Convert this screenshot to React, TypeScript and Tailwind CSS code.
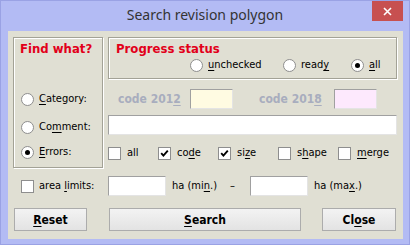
import React from "react";

const ui = "font-['DejaVu_Sans_Condensed','Liberation_Sans',sans-serif]";

function U({ children }: { children: React.ReactNode }) {
  return <span className="underline decoration-1 underline-offset-[2px]">{children}</span>;
}

function Radio({ checked }: { checked?: boolean }) {
  return (
    <span className="flex h-[13px] w-[13px] shrink-0 items-center justify-center rounded-full border border-[#8e8e8e] bg-white">
      {checked && <span className="h-[5px] w-[5px] rounded-full bg-black" />}
    </span>
  );
}

function Check({ checked }: { checked?: boolean }) {
  return (
    <span className="flex h-[13px] w-[13px] shrink-0 items-center justify-center border border-[#8e8e8e] bg-white">
      {checked && (
        <svg width="9" height="9" viewBox="0 0 9 9">
          <path d="M1.2 4.2 L3.4 6.6 L7.8 1.6" stroke="#000" strokeWidth="1.9" fill="none" />
        </svg>
      )}
    </span>
  );
}

const group = "border border-[#a3a296] shadow-[inset_1px_1px_0_#ffffff,1px_1px_0_#ffffff]";
const input = "h-[20px] border border-[#a0a0a0] border-b-[#e4e4e4] border-r-[#e4e4e4]";
const btn =
  "flex h-[23px] items-center justify-center border border-[#acacac] bg-gradient-to-b from-[#f3f3f3] to-[#e3e3e3] text-[12px] font-bold text-black";

export default function App() {
  return (
    <div className={`flex h-[245px] w-[410px] flex-col border border-[#9aa2e4] bg-[#b3bbf4] ${ui}`}>
      <div className="grid h-[30px] shrink-0 grid-cols-[1fr_auto_1fr]">
        <div />
        <div className="font-['Noto_Sans',sans-serif] text-[14px] leading-[27px] text-[#333333]">
          Search revision polygon
        </div>
        <div className="flex justify-end">
          <div className="mr-[6px] flex h-[20px] w-[31px] items-center justify-center bg-[#c75050]">
            <svg width="9" height="9" viewBox="0 0 9 9">
              <path d="M1 1 L8 8 M8 1 L1 8" stroke="#fff" strokeWidth="1.6" />
            </svg>
          </div>
        </div>
      </div>

      <div className="ml-[7px] mr-[6px] mb-[5px] flex flex-1 flex-col bg-[#e0dfd3] pl-[5px] pt-[6px] text-[11px] text-black">
        <div className="grid grid-cols-[90px_289px] grid-rows-[42px_36px_21px_32px] gap-x-[5px]">
          <div className={`col-start-1 row-start-1 row-end-5 ${group}`} />
          <div className="col-start-1 row-start-1 pl-[7px] pt-[4px] text-[13px] font-bold leading-[16px] text-[#e2001a]">
            Find what?
          </div>

          <div className={`col-start-2 row-start-1 flex flex-col ${group}`}>
            <div className="pl-[7px] pt-[3px] text-[13px] font-bold leading-[16px] text-[#e2001a]">
              Progress status
            </div>
            <div className="mt-[2px] flex h-[13px] items-center pl-[81px]">
              <div className="flex w-[93px] items-center gap-[5px]">
                <Radio />
                <span><U>u</U>nchecked</span>
              </div>
              <div className="flex w-[68px] items-center gap-[5px]">
                <Radio />
                <span>read<U>y</U></span>
              </div>
              <div className="flex items-center gap-[5px]">
                <Radio checked />
                <span><U>a</U>ll</span>
              </div>
            </div>
          </div>

          <div className="col-start-1 row-start-2 mb-[6px] flex h-[20px] items-center gap-[5px] self-end pl-[8px]">
            <Radio />
            <span><U>C</U>ategory:</span>
          </div>
          <div className="col-start-2 row-start-2 mb-[6px] flex h-[20px] items-center self-end pl-[10px]">
            <span className="w-[72px] text-[12px] font-bold text-[#a8adbe]">code 201<U>2</U></span>
            <div className={`w-[43px] bg-[#fffbe2] ${input}`} />
            <span className="ml-[26px] w-[75px] text-[12px] font-bold text-[#a8adbe]">code 201<U>8</U></span>
            <div className={`w-[43px] bg-[#fde9fd] ${input}`} />
          </div>

          <div className="col-start-1 row-start-3 mt-[2px] flex h-[20px] items-center gap-[5px] self-start pl-[8px]">
            <Radio />
            <span>Co<U>m</U>ment:</span>
          </div>
          <div className={`col-start-2 row-start-3 w-full self-start bg-white ${input}`} />

          <div className="col-start-1 row-start-4 mt-[6px] flex h-[20px] items-center gap-[5px] self-start pl-[8px]">
            <Radio checked />
            <span><U>E</U>rrors:</span>
          </div>
          <div className="col-start-2 row-start-4 mt-[7px] flex h-[20px] items-center self-start">
            <div className="flex w-[50px] items-center gap-[6px]">
              <Check />
              <span>all</span>
            </div>
            <div className="flex w-[60px] items-center gap-[6px]">
              <Check checked />
              <span>co<U>d</U>e</span>
            </div>
            <div className="flex w-[60px] items-center gap-[6px]">
              <Check checked />
              <span>si<U>z</U>e</span>
            </div>
            <div className="flex w-[60px] items-center gap-[6px]">
              <Check />
              <span>s<U>h</U>ape</span>
            </div>
            <div className="flex items-center gap-[6px]">
              <Check />
              <span><U>m</U>erge</span>
            </div>
          </div>
        </div>

        <div className="mt-[8px] flex h-[20px] items-center">
          <div className="flex w-[95px] items-center gap-[5px] pl-[8px]">
            <Check />
            <span>area <U>l</U>imits:</span>
          </div>
          <div className={`w-[58px] bg-white ${input}`} />
          <span className="w-[64px] pl-[6px]">ha (mi<U>n</U>.)</span>
          <span className="w-[20px]">–</span>
          <div className={`w-[58px] bg-white ${input}`} />
          <span className="pl-[6px]">ha (ma<U>x</U>.)</span>
        </div>

        <div className="mt-[12px] flex">
          <div className={`ml-[1px] w-[73px] ${btn}`}>
            <span><U>R</U>eset</span>
          </div>
          <div className={`ml-[22px] w-[192px] ${btn}`}>
            <span><U>S</U>earch</span>
          </div>
          <div className={`ml-[21px] w-[74px] ${btn}`}>
            <span>Cl<U>o</U>se</span>
          </div>
        </div>
      </div>
    </div>
  );
}
